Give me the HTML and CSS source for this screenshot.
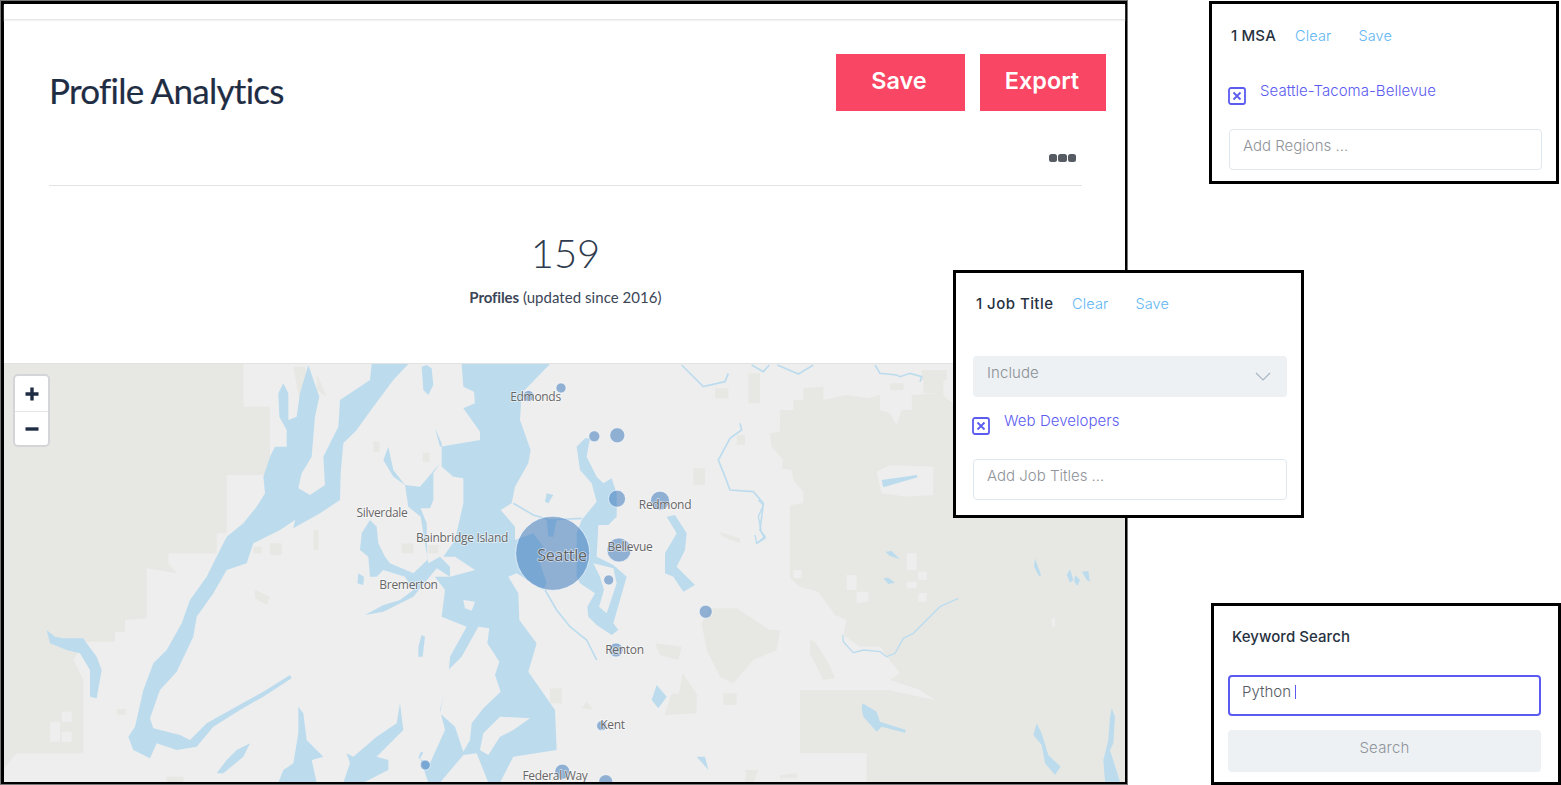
FILE: index.html
```html
<!DOCTYPE html>
<html lang="en">
<head>
<meta charset="utf-8">
<title>Profile Analytics</title>
<link rel="stylesheet" href="styles.css">
</head>
<body>
<div class="canvas">
  <main class="frame">
    <div class="strip"></div>
    <header class="head">
      <h1 class="title">Profile Analytics</h1>
      <div class="actions">
        <button class="btn btn-save">Save</button>
        <button class="btn btn-export">Export</button>
      </div>
    </header>
    <div class="more"><span class="dot"></span><span class="dot"></span><span class="dot"></span></div>
    <hr class="rule">
    <section class="stats">
      <div class="count">159</div>
      <div class="caption"><b>Profiles</b> (updated since 2016)</div>
    </section>
    <section class="map">
      <svg class="map-svg" viewBox="4 364 1121 418" width="1121" height="418">
        <rect class="land" x="4" y="364" width="1121" height="418"/>
        <g transform="translate(740,360) scale(.33333)">
          <path class="park" d="M120 150L160 150L160 120L190 120L190 85L250 80L250 120L320 105L385 115L420 105L420 150L450 160L470 195L485 150L515 150L515 105L600 100L640 130H1170V1280H150V435L190 430L190 395L160 360L155 330L125 325L130 300L95 260L90 220L120 215Z"/>
          <path class="park" d="M550 60L610 50L610 130L580 100L550 100ZM545 30H620V60H545ZM450 70H490V90H450ZM25 40H60V130H25Z"/>
          <path class="land" d="M410 335L450 315L580 320L580 405L500 410L425 400Z"/>
          <path class="water" d="M425 360L530 345L533 352L430 382Z"/>
          <path class="river" d="M35 15L70 35L88 15M112 15L175 42L220 15M405 15L420 40L470 45L480 50L510 40L545 50L540 65"/>
        </g>
        <g transform="translate(740,500) scale(.33333)">
          <path class="land" d="M0 0H150V100H130L120 210L180 260L235 275L285 345L320 360L310 405L360 440L420 440L445 475L480 520L450 540L540 570L585 600L445 570H180V760H380V860H0Z"/>
          <path class="park" d="M210 420L225 425L265 490L285 535L250 540L210 460ZM15 810L50 815L45 840H25ZM120 825L170 820V835L120 835Z"/>
          <path class="land" d="M320 225H350V270H320ZM350 275H385V305L350 310ZM500 160H530V210H500ZM535 215H560V240H535ZM500 245H530V265H500ZM535 280H560V305H535ZM160 210H185V235H160ZM935 355H945V380H935Z"/>
          <path class="water" d="M436 155L455 153L480 178L450 168ZM430 235L445 233L465 248L445 252ZM885 175L903 225L898 230L882 200ZM980 225L990 208L1000 240L990 248ZM1005 225L1020 240L1012 258L1003 245ZM1025 215L1045 213L1050 245L1040 240ZM368 610L410 635L420 665L498 690L495 698L425 680L410 695L370 650L365 625ZM890 670L905 700L925 765L962 800L945 825L915 790L905 735L880 705ZM1115 625L1125 650L1120 730L1110 750L1140 845L1095 845L1090 780L1105 720L1110 650Z"/>
          <path class="river thin" d="M655 295L600 320L560 360L520 400L490 415L465 460L440 470L420 455L370 450L340 458L310 425L308 405M55 0L70 15L55 50L65 100L75 115L50 130L45 105"/>
        </g>
        <g transform="translate(0,360) scale(.33333)">
          <path class="park" d="M12 12H730V140H810V345H745V345H680V520H650V580H505V610L530 640L440 625V775L375 780V815H345V845H255L220 900L250 960V1180H50L15 1220L12 1230Z"/>
          <path class="land" d="M150 1085h30v30h-30zM185 1055h30v30h-30zM150 1115h30v30h-30zM185 1115h30v30h-30z"/>
          <path class="park" d="M880 20L915 20L930 100L900 130ZM950 40L980 110L950 90ZM1120 245h18v30h-18zM1268 278h20v28h-20zM765 690L810 710L800 735L765 715ZM810 550h35v35h-35zM760 560h25v20h-25zM940 510h15v60h-15zM1205 550h35v30h-35zM1285 555h30v25h-30zM350 1047h28v17h-28zM500 1250h50v20h-50z"/>
          <path class="water" d="M850 70L835 100L838 170L860 210L860 260L825 260L810 290L790 350L795 400L770 440L730 490L680 530L655 580L620 650L570 720L545 790L500 870L460 910L430 990L405 1100L385 1130L400 1170L450 1195L470 1150L530 1170L590 1160L640 1100L720 1050L790 1010L875 955L870 945L790 995L700 1045L620 1090L570 1140L540 1125L460 1105L450 1075L480 990L530 935L580 830L590 770L640 700L680 630L740 610L760 550L840 510L885 480L880 505L960 460L1020 420L1022 340L1030 250L1070 210L1120 140L1180 60L1225 12H1115L1110 60L1020 120L1015 200L970 290L975 375L930 405L895 385L905 340L935 290L945 170L958 110L925 15L900 100L890 170L865 180L865 100Z"/>
          <path class="water" d="M140 810L150 850L200 870L240 880L270 930L270 1010L290 1015L305 930L290 890L260 850L250 835L190 835L165 830Z"/>
          <path class="water" d="M1265 20L1270 90L1285 105L1300 75L1295 25L1280 15Z"/>
          <path class="water" d="M1385 12H1650L1565 100L1560 180L1592 270L1585 310L1545 380L1535 430L1502 450L1545 500L1545 540L1600 520L1630 560L1620 610L1640 670L1630 690L1550 640L1525 650L1555 700L1558 780L1610 850L1585 935L1665 1050L1670 1170L1540 1190L1500 1268H1465L1430 1180L1390 1185L1320 1268H1285L1260 1195L1270 1178L1262 1175L1255 1195L1290 1210L1335 1110L1320 1050L1345 950L1350 890L1400 800L1325 770L1335 690L1305 650L1350 650L1425 630L1365 590L1330 590L1365 540L1390 430L1390 355L1360 350L1325 320L1325 250L1305 205L1320 260L1440 240L1440 215L1390 145L1425 130L1422 95L1390 80Z"/>
          <path class="water" d="M1165 260L1150 300L1180 350L1215 375L1260 380L1320 310L1300 340L1300 420L1290 445L1262 445L1280 490L1282 600L1240 640L1170 610L1155 590L1135 550L1130 500L1110 480L1085 520L1080 570L1105 590L1110 650L1130 650L1150 630L1215 650L1240 690L1200 720L1150 735L1095 765L1150 755L1240 710L1310 625L1350 650L1350 620L1320 590L1285 610L1262 470L1225 440L1215 375L1180 330Z"/>
          <path class="land" d="M1435 800L1468 805L1462 850L1498 905L1485 945L1502 995L1450 1045L1415 1090L1410 1140L1390 1175L1365 1100L1320 1060L1345 930L1385 890ZM1440 1170L1450 1120L1500 1070L1590 1075L1540 1110L1500 1130L1465 1185ZM1390 720L1425 725L1415 752L1395 745Z"/>
          <path class="water" d="M1075 640L1072 670L1090 675L1092 650ZM1265 825L1255 860L1255 890L1268 890L1275 830Z"/>
          <path class="water" d="M895 1040L910 1060L920 1140L970 1190L935 1200L950 1268H835L850 1230L880 1210L895 1120ZM1200 1030L1210 1110L1130 1190L1165 1200L1165 1230L1090 1268H1030L1050 1210L1040 1180L1060 1190L1130 1130L1190 1090ZM750 1150L730 1190L670 1240L650 1240L680 1200L710 1170Z"/>
        </g>
        <g transform="translate(400,360) scale(.33333)">
          <path class="park" d="M955 515L1020 535V550L970 530ZM1010 225h25v30h-25zM945 85H985V115H945ZM880 325H915V375H880ZM765 850L845 860L835 900L780 885ZM815 1000L890 1010L890 1060L795 1065ZM848 940L895 1010H835ZM970 1000H1010V1035H970ZM450 985H485V1030H450ZM545 1045L580 1050L560 1025ZM1040 1230L1075 1230L1060 1265H1035Z"/>
          <path class="park" d="M930 745L1010 745L1110 810L1140 810L1130 870L1060 900L1000 970L960 950L920 870L905 790Z"/>
          <path class="water" d="M555 235L570 235L560 290L590 350L610 370L635 355L650 400L650 470L625 495L595 500L590 590L640 615L680 650L660 720L640 790L655 810L635 825L590 795L565 770L562 740L585 700L540 670L530 650L530 520L545 480L590 425L575 370L540 330L530 260Z"/>
          <path class="water" d="M440 480L470 480L460 530L445 530Z"/>
          <path class="land" d="M580 610L640 625L650 670L620 760L597 740L612 690L600 650ZM595 495L620 495L615 540L595 550Z"/>
          <path class="water" d="M800 470L825 465L860 520L855 570L830 620L885 675L850 695L820 650L795 640L795 580L830 520ZM440 400L460 405L445 430L435 425ZM770 975L755 1020L775 1045L800 1010ZM890 1190L915 1190L925 1230Z"/>
          <path class="river" d="M340 430L400 465L450 480L545 475M435 690L470 750L510 800L560 840L590 900M845 15L910 80L975 65L985 40M1020 190L1025 210L990 235L955 300L975 350L990 390L1060 395L1090 430L1080 510L1095 530L1070 550"/>
        </g>
        <g class="bubbles">
          <circle cx="552.7" cy="553.3" r="37"/>
          <circle cx="561" cy="388" r="5"/>
          <circle cx="528.5" cy="396" r="5.5"/>
          <circle cx="594.3" cy="436.3" r="5.5"/>
          <circle cx="617.3" cy="435.3" r="7.5"/>
          <circle cx="617" cy="498.7" r="8.5"/>
          <circle cx="660" cy="500.7" r="9.5"/>
          <circle cx="619" cy="550" r="12"/>
          <circle cx="608.7" cy="580" r="5"/>
          <circle cx="705.7" cy="611.7" r="6.5"/>
          <circle cx="616" cy="650" r="7"/>
          <circle cx="601.7" cy="725.7" r="5"/>
          <circle cx="425.3" cy="765" r="5"/>
          <circle cx="562.3" cy="771.7" r="7.5"/>
          <circle cx="605.7" cy="781.7" r="7"/>
        </g>
        <g class="labels">
          <text x="535.5" y="401">Edmonds</text>
          <text x="382" y="517">Silverdale</text>
          <text x="462" y="542">Bainbridge Island</text>
          <text x="408.5" y="589">Bremerton</text>
          <text class="big" x="562" y="561">Seattle</text>
          <text x="665" y="509">Redmond</text>
          <text x="630" y="551">Bellevue</text>
          <text x="624.5" y="654">Renton</text>
          <text x="612.5" y="729">Kent</text>
          <text x="555" y="779.5">Federal Way</text>
        </g>
      </svg>
      <div class="zoom">
        <button class="zoom-btn" aria-label="Zoom in"><svg width="14" height="14" viewBox="0 0 14 14"><path d="M7 .5v13M.5 7h13"/></svg></button>
        <button class="zoom-btn" aria-label="Zoom out"><svg width="14" height="14" viewBox="0 0 14 14"><path d="M.5 7h13"/></svg></button>
      </div>
    </section>
  </main>

  <aside class="panel panel-msa">
    <div class="panel-head"><span class="panel-title title-tight">1 MSA</span><a class="link">Clear</a><a class="link">Save</a></div>
    <div class="chip">
      <svg class="chip-x" width="18" height="18" viewBox="0 0 18 18"><rect x="1" y="1" width="16" height="16" rx="2"/><path d="M5.5 5.5l7 7M12.5 5.5l-7 7"/></svg>
      <span class="chip-text">Seattle-Tacoma-Bellevue</span>
    </div>
    <div class="field">Add Regions ...</div>
  </aside>

  <aside class="panel panel-job">
    <div class="panel-head"><span class="panel-title">1 Job Title</span><a class="link">Clear</a><a class="link">Save</a></div>
    <div class="select">Include
      <svg width="16" height="9" viewBox="0 0 16 9"><path d="M1 1l7 7 7-7"/></svg>
    </div>
    <div class="chip">
      <svg class="chip-x" width="18" height="18" viewBox="0 0 18 18"><rect x="1" y="1" width="16" height="16" rx="2"/><path d="M5.5 5.5l7 7M12.5 5.5l-7 7"/></svg>
      <span class="chip-text">Web Developers</span>
    </div>
    <div class="field">Add Job Titles ...</div>
  </aside>

  <aside class="panel panel-key">
    <div class="panel-title key-title">Keyword Search</div>
    <div class="field field-active">Python<span class="caret"></span></div>
    <div class="search-btn">Search</div>
  </aside>
</div>
</body>
</html>
```

FILE: styles.css
```css
* { box-sizing: border-box; }
html, body { margin: 0; padding: 0; background: #fff; }
body { width: 1561px; height: 785px; overflow: hidden; }
.canvas { position: relative; width: 1561px; height: 785px; overflow: hidden; }

.frame {
  width: 1128px;
  height: 785px;
  margin: 0;
  border: 3px solid #000;
  border-left-width: 4px;
  border-top-width: 4px;
  outline: 1px solid #777;
  outline-offset: -1px;
  display: flex;
  flex-direction: column;
  background: #fff;
}
.strip { height: 16px; flex: none; border-bottom: 1px solid #e8e8e8; box-shadow: 0 1px 1px #f2f2f2; }
.head {
  flex: none;
  height: 91px;
  display: flex;
  justify-content: space-between;
  padding: 34px 19px 0 45px;
}
.title {
  margin: 16px 0 0;
  font: 400 35px/40px Lato, sans-serif;
  letter-spacing: -.72px;
  color: #1f2d44;
  -webkit-text-stroke: .2px #1f2d44;
}
.actions { display: flex; gap: 15px; align-items: flex-start; }
.btn {
  height: 57px;
  border: 0;
  border-radius: 0;
  background: #f94665;
  color: #fff;
  font: 600 23.4px/53px Inter, sans-serif;
  padding: 0 3px 4px 0;
}
.btn-save { width: 129px; }
.btn-export { width: 126px; padding-left: 1px; }
.more {
  flex: none;
  height: 74px;
  padding: 43px 49px 0 0;
  display: flex;
  justify-content: flex-end;
  align-items: flex-start;
  gap: 1px;
}
.dot { width: 8.5px; height: 8px; border-radius: 2.5px; background: #565b63; }
.rule { flex: none; margin: 0 43px 0 45px; height: 1px; border: 0; background: #e3e3e3; }
.stats { flex: none; height: 177px; text-align: center; padding: 44px 0 0 2px; color: #2e3a4d; }
.count { font: 300 40px/46px Lato, sans-serif; color: #2f3b4e; }
.caption { margin-top: 11px; font: 400 15px/20px Lato, sans-serif; letter-spacing: .05px; color: #3b4657; }
.caption b { font-weight: 700; letter-spacing: -.1px; }

.map { position: relative; flex: 1; min-height: 0; overflow: hidden; border-top: 1px solid #e2e2e2; }
.map-svg { display: block; }
.land { fill: #eeeeee; }
.park { fill: #e7e8e4; }
.water { fill: #bcdcee; }
.river { fill: none; stroke: #bcdcee; stroke-width: 5; }
.river.thin { stroke-width: 4; }
.bubbles circle { fill: rgba(66, 124, 190, .55); stroke: rgba(255, 255, 255, .55); stroke-width: 1; }
.labels text {
  font: 400 12px "Open Sans", sans-serif;
  letter-spacing: -.3px;
  fill: #666;
  text-anchor: middle;
  stroke: rgba(255, 255, 255, .6);
  stroke-width: 1.5px;
  paint-order: stroke;
}
.labels .big { font-size: 16px; letter-spacing: -.2px; fill: #5c6268; }

.zoom {
  position: absolute;
  left: 9px;
  top: 10px;
  width: 37px;
  border: 2px solid #d3d5d8;
  border-radius: 5px;
  background: #fff;
  display: flex;
  flex-direction: column;
}
.zoom-btn {
  height: 35px;
  border: 0;
  background: none;
  padding: 0;
  display: flex;
  align-items: center;
  justify-content: center;
}
.zoom-btn + .zoom-btn { border-top: 1px solid #e6e6e6; height: 34px; }
.zoom-btn svg { fill: none; stroke: #1f2d44; stroke-width: 3.4; }

.panel {
  position: absolute;
  border: 3px solid #000;
  background: #fff;
  font-family: Inter, sans-serif;
  font-size: 15px;
}
.panel-msa { left: 1209px; top: 1px; width: 350px; height: 183px; padding: 0 14px 0 17px; }
.panel-job { left: 953px; top: 270px; width: 351px; height: 248px; padding: 0 14px 0 17px; }
.panel-key { left: 1211px; top: 603px; width: 350px; height: 182px; padding: 0 17px 0 14px; }
.panel-head { display: flex; align-items: center; height: 20px; margin-top: 21px; }
.panel-job .panel-head { margin-top: 20px; padding-left: 3px; }
.panel-msa .panel-head { padding-left: 2px; }
.panel-title { font-weight: 500; font-size: 15px; color: #27323f; letter-spacing: .45px; }
.title-tight { letter-spacing: .15px; width: 64px; }
.panel-job .panel-title { width: 96px; }
.link { font-weight: 300; font-size: 14.5px; color: #62b6f3; letter-spacing: .15px; margin-right: 26px; }
.panel-msa .link:last-child, .panel-job .link:last-child { margin-left: 1px; }
.chip { display: flex; align-items: flex-start; gap: 14px; }
.panel-msa .chip { margin: 37px 0 0 -1px; height: 25px; }
.panel-job .chip { margin: 15px 0 0 -1px; height: 25px; }
.chip-x { fill: none; stroke: #5b5bf0; stroke-width: 1.8; flex: none; margin-top: 5px; }
.chip-text { font-weight: 300; font-size: 15px; line-height: 18px; color: #5b5bf0; letter-spacing: .05px; }
.field {
  height: 41px;
  border: 1.5px solid #dfe8ee;
  border-radius: 4px;
  font-weight: 300;
  font-size: 15px;
  line-height: 32px;
  padding: 0 13px;
  color: #8f9399;
}
.panel-msa .field { margin-top: 22px; width: 313px; }
.panel-job .field { margin-top: 22px; }
.select {
  position: relative;
  margin-top: 43px;
  height: 41px;
  border-radius: 4px;
  background: #edf1f4;
  font-weight: 300;
  font-size: 15px;
  line-height: 33px;
  padding: 0 14px;
  color: #8a8f95;
  letter-spacing: .1px;
}
.select svg { position: absolute; right: 16px; top: 16px; fill: none; stroke: #a9b7c4; stroke-width: 1.2; }
.key-title { margin-top: 21px; padding-left: 4px; line-height: 20px; letter-spacing: .05px; }
.field-active {
  margin-top: 28px;
  padding: 0 12px;
  border: 2px solid #5b5bf0;
  color: #555b63;
  display: flex;
  align-items: flex-start;
  gap: 4px;
  line-height: 30px;
}
.caret { display: block; width: 1px; height: 14px; margin-top: 8px; background: #5b5bf0; }
.search-btn {
  margin-top: 14px;
  height: 42px;
  border-radius: 4px;
  background: #edf1f4;
  text-align: center;
  font-weight: 300;
  line-height: 36px;
  color: #8f9399;
  letter-spacing: .2px;
}
```
